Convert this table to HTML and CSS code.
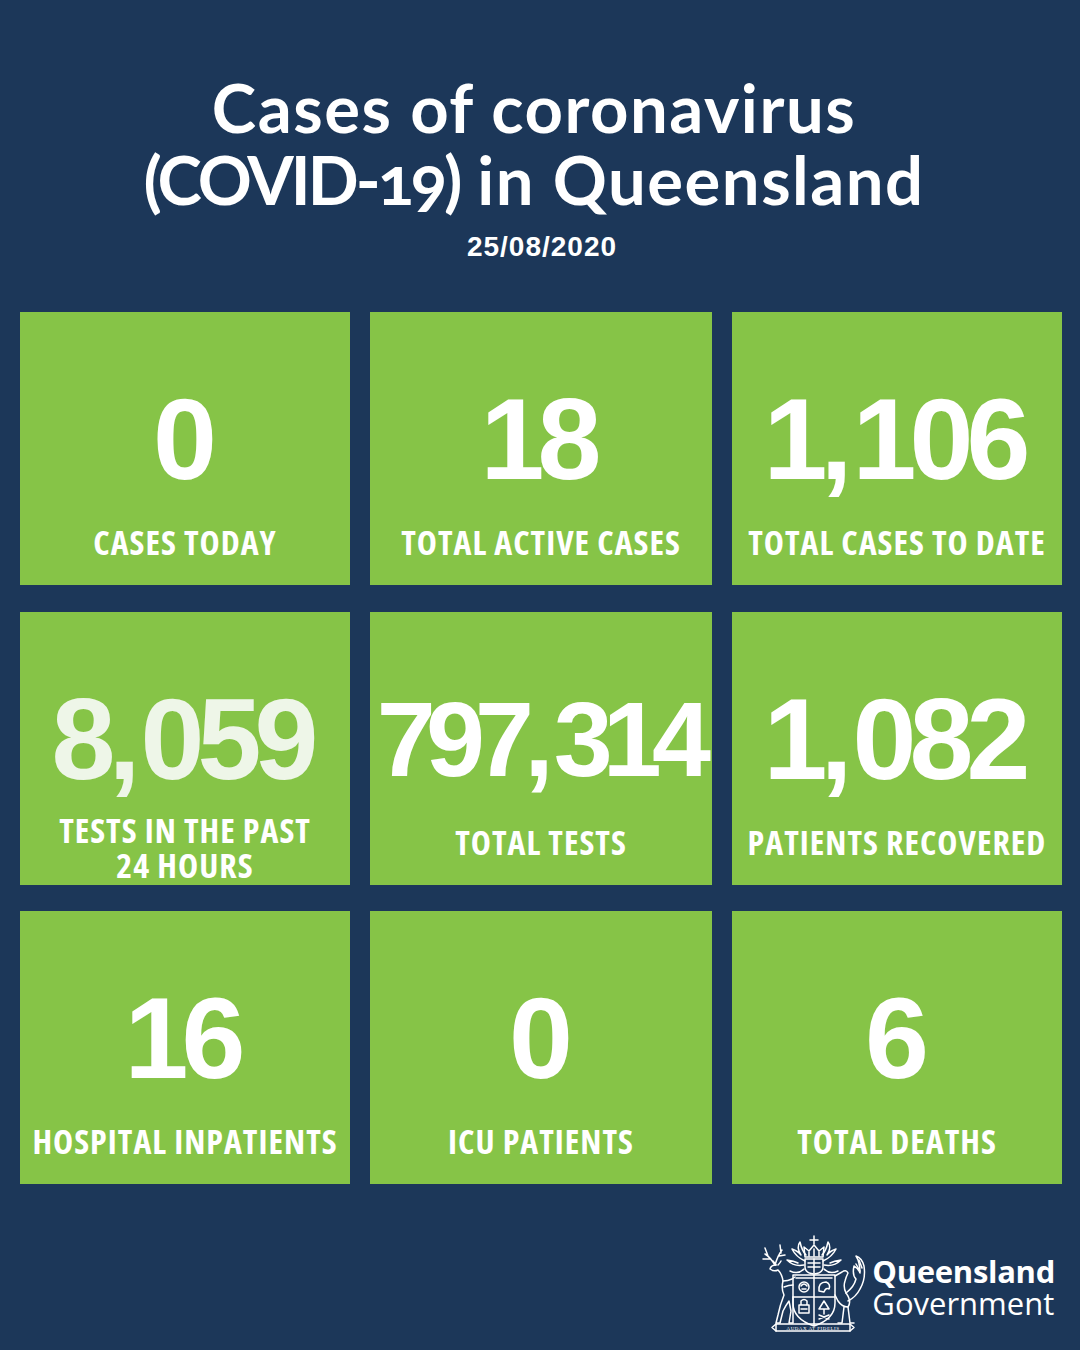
FILE: index.html
```html
<!DOCTYPE html>
<html lang="en">
<head>
<meta charset="utf-8">
<title>Cases of coronavirus (COVID-19) in Queensland</title>
<link rel="stylesheet" href="styles.css">
</head>
<body>
<main class="page">
  <header class="header">
    <h1 class="title">Cases of coronavirus<br><span class="title-caps">(COVID-19)</span> in Queensland</h1>
    <p class="date">25/08/2020</p>
  </header>

  <section class="grid">
    <div class="card"><div class="num">0</div><div class="label">CASES TODAY</div></div>
    <div class="card"><div class="num">18</div><div class="label">TOTAL ACTIVE CASES</div></div>
    <div class="card"><div class="num">1<span class="sep">,</span>106</div><div class="label">TOTAL CASES TO DATE</div></div>

    <div class="card"><div class="num num-soft">8<span class="sep">,</span>059</div><div class="label label-two">TESTS IN THE PAST<br>24 HOURS</div></div>
    <div class="card"><div class="num num-small">797<span class="sep">,</span>314</div><div class="label">TOTAL TESTS</div></div>
    <div class="card"><div class="num">1<span class="sep">,</span>082</div><div class="label">PATIENTS RECOVERED</div></div>

    <div class="card"><div class="num">16</div><div class="label">HOSPITAL INPATIENTS</div></div>
    <div class="card"><div class="num">0</div><div class="label">ICU PATIENTS</div></div>
    <div class="card"><div class="num">6</div><div class="label">TOTAL DEATHS</div></div>
  </section>

  <footer class="footer">
    <div class="brand">
      <svg class="crest" viewBox="0 0 110 100" width="110" height="100" aria-hidden="true">
        <g fill="none" stroke="#fff" stroke-width="1.5" stroke-linejoin="round" stroke-linecap="round">
          <path d="M58 1 V9 M54 5 H62"/>
          <path d="M49 22 L48 12 L53 16 L58 10 L63 16 L68 12 L67 22 Z"/>
          <path d="M53 17 V21 M58 14 V21 M63 17 V21"/>
          <path d="M49 24 H67 V32 Q67 38 58 39 Q49 38 49 32 Z"/>
          <path d="M52 28 H64 M52 32 H64 M58 24 V38"/>
          <path d="M49 26 Q40 22 36 14 Q42 16 45 20 Q40 12 44 7 Q46 16 50 20"/>
          <path d="M48 30 Q38 32 31 25 Q38 26 42 28"/>
          <path d="M48 34 Q42 40 34 36"/>
          <path d="M67 26 Q76 22 80 14 Q74 16 71 20 Q76 12 72 7 Q70 16 66 20"/>
          <path d="M68 30 Q78 32 85 25 Q78 26 74 28"/>
          <path d="M68 34 Q74 40 82 36"/>
          <path d="M37 40 H79 V68 Q79 84 58 91 Q37 84 37 68 Z"/>
          <path d="M37 62 H79 M58 40 V90"/>
          <path d="M40 43 H76"/>
          <circle cx="48" cy="52" r="5"/>
          <path d="M45 51 Q48 47 51 51 M46 54 H50"/>
          <path d="M63 56 Q62 47 70 47 Q75 49 73 54 Q70 52 68 57 Z"/>
          <path d="M43 70 H53 V78 H43 Z M45 70 V66 Q48 63 51 66 V70 M45 74 H51"/>
          <path d="M68 66 L63 74 H73 Z M68 74 V79 M63 80 L73 84 M73 80 L63 84"/>
          <path d="M20 30 Q15 30 14 34 Q18 37 22 35 Q26 39 27 46 Q25 54 28 60 Q24 70 22 80 L20 88 H24 L27 76 Q30 70 33 66 L35 76 L33 88 H37 L37 74 L37 62"/>
          <path d="M27 46 Q32 46 36 44 L39 42 M28 52 Q33 50 37 50"/>
          <path d="M19 30 Q14 22 9 19 M14 24 L7 24 M12 21 L9 13 M19 30 Q22 20 26 15 M23 21 L29 20 M25 18 L24 10"/>
          <path d="M20 30 Q18 27 17 26 M22 30 Q24 28 25 26"/>
          <path d="M79 41 L86 37 Q90 34 92 38 Q90 42 89 46 Q87 52 90 58 Q96 66 92 72 Q86 72 82 66 Q80 62 79 60"/>
          <path d="M90 58 Q98 52 100 44 Q96 40 98 31 Q102 33 104 38 Q104 27 100 21 Q106 23 108 31 Q110 44 104 54 Q100 62 92 66"/>
          <path d="M100 29 L104 36 M103 25 L106 33"/>
          <path d="M88 72 L86 88 H82 M92 72 L94 88 H98"/>
          <path d="M20 89 H94 V96 H20 Z"/>
          <path d="M20 89 L16 92.5 L20 96 M94 89 L98 92.5 L94 96"/>
        </g>
        <text x="57" y="94.6" class="motto" text-anchor="middle">AUDAX AT FIDELIS</text>
      </svg>
      <div class="wordmark">
        <span class="wm-bold">Queensland</span>
        <span class="wm-reg">Government</span>
      </div>
    </div>
  </footer>
</main>
</body>
</html>
```

FILE: styles.css
```css
html, body {
  margin: 0;
  padding: 0;
}

body {
  background: #1c3759;
  color: #fff;
  width: 1080px;
  height: 1350px;
  overflow: hidden;
}

.page {
  display: flex;
  flex-direction: column;
}

.header {
  padding-top: 71px;
  text-align: center;
}

.title {
  margin: 0;
  font-family: Lato, "Open Sans", sans-serif;
  font-weight: 700;
  font-size: 67px;
  line-height: 72px;
  letter-spacing: 1.5px;
  font-variant-numeric: oldstyle-nums;
  padding-right: 12px;
}

.title-caps {
  letter-spacing: -3px;
}

.date {
  margin: 16px 0 0;
  font-family: "Liberation Sans", Arial, sans-serif;
  font-weight: 700;
  font-size: 28px;
  line-height: 32px;
  letter-spacing: 1px;
  padding-left: 4px;
}

.grid {
  margin-top: 49px;
  padding-left: 20px;
  display: grid;
  grid-template-columns: 330px 342px 330px;
  grid-auto-rows: 273px;
  column-gap: 20px;
  row-gap: 26.5px;
}

.card {
  background: #86c447;
  display: flex;
  flex-direction: column;
  align-items: center;
  text-align: center;
  padding-top: 70px;
  box-sizing: border-box;
}

.num {
  font-family: "Liberation Sans", Arial, sans-serif;
  font-weight: 700;
  font-size: 115px;
  line-height: 115px;
  height: 115px;
  letter-spacing: -7px;
  text-indent: -7px;
  white-space: nowrap;
}

.sep {
  letter-spacing: 0;
}

.num-small {
  font-size: 106px;
  letter-spacing: -9.8px;
  text-indent: -4px;
}

.num-soft {
  color: #eef6e8;
}

.label {
  margin-top: 28px;
  font-family: "Open Sans", "Noto Sans", sans-serif;
  font-weight: 700;
  font-size: 34px;
  line-height: 35px;
  font-stretch: 87.5%;
  letter-spacing: 1px;
  white-space: nowrap;
}

.label-two {
  margin-top: 16px;
}

.footer {
  margin-top: 51px;
  display: flex;
  justify-content: flex-end;
  padding-right: 25px;
}

.brand {
  display: flex;
  align-items: flex-start;
  gap: 6px;
}

.crest {
  display: block;
}

.motto {
  fill: #fff;
  font-family: "Liberation Serif", serif;
  font-size: 5px;
  letter-spacing: 0.5px;
}

.wordmark {
  display: flex;
  flex-direction: column;
  padding-top: 20px;
  font-family: "Open Sans", "Noto Sans", sans-serif;
  font-size: 31px;
  line-height: 32px;
}

.wm-bold {
  font-weight: 700;
  letter-spacing: -0.3px;
}

.wm-reg {
  font-weight: 400;
}
```
